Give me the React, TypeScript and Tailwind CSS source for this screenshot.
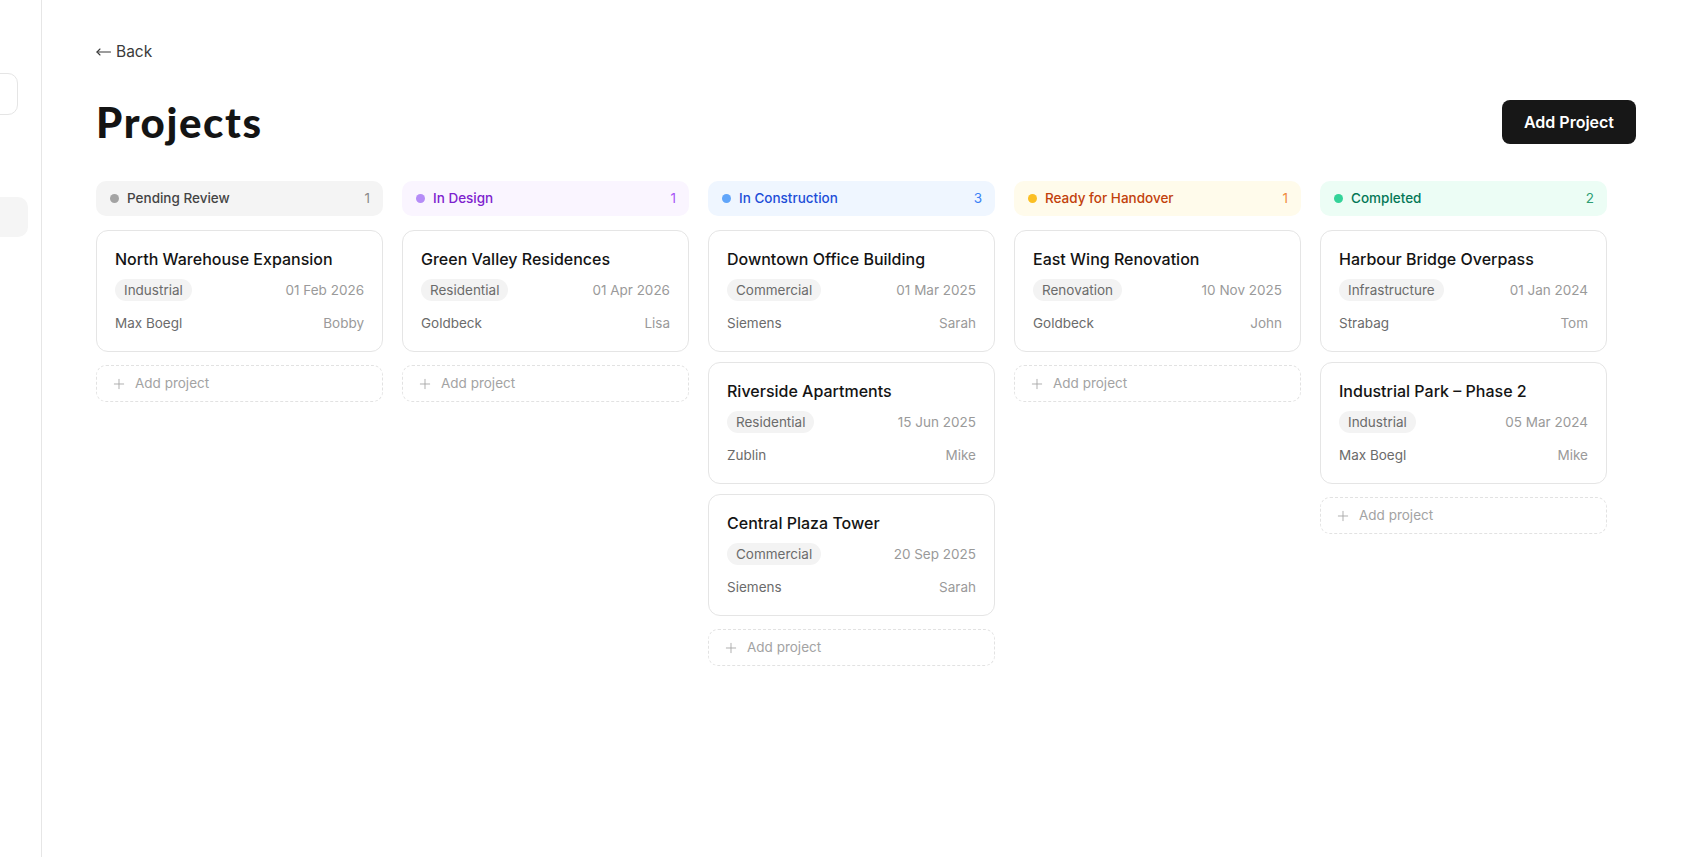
import { Plus } from 'lucide-react'

type Project = {
  title: string
  type: string
  date: string
  company: string
  owner: string
}

type Column = {
  name: string
  headerClass: string
  dotClass: string
  textClass: string
  countClass: string
  projects: Project[]
}

const columns: Column[] = [
  {
    name: 'Pending Review',
    headerClass: 'bg-[#f4f4f4]',
    dotClass: 'bg-[#a3a3a3]',
    textClass: 'text-[#444444]',
    countClass: 'text-[#8a8a8a]',
    projects: [
      { title: 'North Warehouse Expansion', type: 'Industrial', date: '01 Feb 2026', company: 'Max Boegl', owner: 'Bobby' },
    ],
  },
  {
    name: 'In Design',
    headerClass: 'bg-[#faf5ff]',
    dotClass: 'bg-[#b58cf7]',
    textClass: 'text-[#7e22ce]',
    countClass: 'text-[#a855f7]',
    projects: [
      { title: 'Green Valley Residences', type: 'Residential', date: '01 Apr 2026', company: 'Goldbeck', owner: 'Lisa' },
    ],
  },
  {
    name: 'In Construction',
    headerClass: 'bg-[#eff6ff]',
    dotClass: 'bg-[#60a5fa]',
    textClass: 'text-[#1d4ed8]',
    countClass: 'text-[#3b82f6]',
    projects: [
      { title: 'Downtown Office Building', type: 'Commercial', date: '01 Mar 2025', company: 'Siemens', owner: 'Sarah' },
      { title: 'Riverside Apartments', type: 'Residential', date: '15 Jun 2025', company: 'Zublin', owner: 'Mike' },
      { title: 'Central Plaza Tower', type: 'Commercial', date: '20 Sep 2025', company: 'Siemens', owner: 'Sarah' },
    ],
  },
  {
    name: 'Ready for Handover',
    headerClass: 'bg-[#fffbeb]',
    dotClass: 'bg-[#fbbf24]',
    textClass: 'text-[#c2410c]',
    countClass: 'text-[#f08a3c]',
    projects: [
      { title: 'East Wing Renovation', type: 'Renovation', date: '10 Nov 2025', company: 'Goldbeck', owner: 'John' },
    ],
  },
  {
    name: 'Completed',
    headerClass: 'bg-[#ecfdf5]',
    dotClass: 'bg-[#34d399]',
    textClass: 'text-[#047857]',
    countClass: 'text-[#2f9e74]',
    projects: [
      { title: 'Harbour Bridge Overpass', type: 'Infrastructure', date: '01 Jan 2024', company: 'Strabag', owner: 'Tom' },
      { title: 'Industrial Park – Phase 2', type: 'Industrial', date: '05 Mar 2024', company: 'Max Boegl', owner: 'Mike' },
    ],
  },
]

export default function App() {
  return (
    <div className="flex h-[857px] w-full overflow-hidden bg-white font-['Inter',sans-serif] text-[#111]">
      {/* collapsed sidebar, content pushed off to the left */}
      <aside className="relative w-[42px] shrink-0 border-r border-[#e6e6e6] overflow-hidden">
        <div className="absolute left-[-24px] top-[73px] h-[42px] w-[42px] rounded-[10px] border border-[#e5e5e5] flex items-center justify-end pr-[17px]">
          <span className="block h-[2px] w-[4px] bg-[#999]" />
        </div>
        <div className="absolute left-[-20px] top-[197px] h-[40px] w-[48px] rounded-[10px] bg-[#f5f5f5]" />
      </aside>

      <main className="flex-1 min-w-0 pl-[54px] pr-[47px] pt-[42px]">
        <button className="flex items-center gap-[5px] h-[20px] text-[15.5px] text-[#3a3a3a]">
          <svg width="15" height="10" viewBox="0 0 15 10" fill="none" stroke="#3a3a3a" strokeWidth="1.1" strokeLinecap="round" strokeLinejoin="round">
            <path d="M14.5 5H1" />
            <path d="M4 2L1 5l3 3" />
          </svg>
          <span>Back</span>
        </button>

        <div className="mt-[38px] flex items-center justify-between h-[44px]">
          <h1 className="font-['Lato',sans-serif] font-black text-[42px] leading-none tracking-[1.6px] text-[#141414]">
            Projects
          </h1>
          <button className="h-[44px] px-[22px] rounded-[8px] bg-[#171717] text-white text-[16px] font-semibold">
            Add Project
          </button>
        </div>

        <div className="mt-[37px] flex items-start gap-[19px]">
          {columns.map((col) => (
            <section key={col.name} className="w-[287px] shrink-0">
              <div className={`h-[35px] rounded-[10px] flex items-center pl-[14px] pr-[13px] ${col.headerClass}`}>
                <span className={`h-[9px] w-[9px] rounded-full ${col.dotClass}`} />
                <span className={`ml-[8px] text-[13.5px] font-medium ${col.textClass}`}>{col.name}</span>
                <span className={`ml-auto text-[13.5px] ${col.countClass}`}>{col.projects.length}</span>
              </div>

              <div className="mt-[14px] flex flex-col gap-[10px]">
                {col.projects.map((p) => (
                  <ProjectCard key={p.title} project={p} />
                ))}
              </div>

              <button className="mt-[13px] w-full h-[37px] rounded-[10px] border border-dashed border-[#e2e2e2] flex items-center pl-[14px] gap-[8px] text-[13.5px] text-[#a3a3a3]">
                <Plus size={16} strokeWidth={1.3} className="text-[#a3a3a3]" />
                <span>Add project</span>
              </button>
            </section>
          ))}
        </div>
      </main>
    </div>
  )
}

function ProjectCard({ project }: { project: Project }) {
  return (
    <div className="rounded-[12px] border border-[#e5e5e5] bg-white px-[18px] pt-[17px] pb-[18px]">
      <h3 className="text-[16px] leading-[22px] font-medium text-[#141414]">{project.title}</h3>
      <div className="mt-[9px] flex items-center justify-between">
        <span className="h-[22px] px-[9px] rounded-full bg-[#f3f3f3] text-[13.5px] text-[#6b6b6b] flex items-center">
          {project.type}
        </span>
        <span className="text-[13.5px] text-[#9a9a9a]">{project.date}</span>
      </div>
      <div className="mt-[12px] h-[20px] flex items-center justify-between text-[13.5px]">
        <span className="text-[#6b6b6b]">{project.company}</span>
        <span className="text-[#9a9a9a]">{project.owner}</span>
      </div>
    </div>
  )
}
